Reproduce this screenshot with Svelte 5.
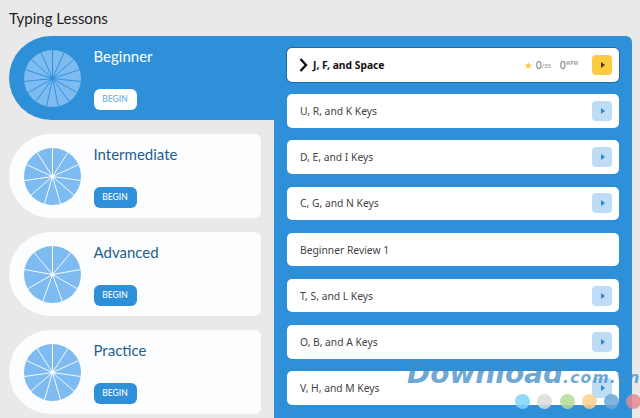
<script>
  const cards = [
    { name: 'Beginner', n: 15, active: true },
    { name: 'Intermediate', n: 11 },
    { name: 'Advanced', n: 9 },
    { name: 'Practice', n: 11 }
  ];
  const rows = ['U, R, and K Keys','D, E, and I Keys','C, G, and N Keys','Beginner Review 1','T, S, and L Keys','O, B, and A Keys','V, H, and M Keys'];
  const dots = ['#7fd4fb','#dcdcdc','#b4dc96','#fdd08c','#6ba6d6','#e88a94'];
  function spokes(n) {
    return Array.from({ length: n }, (_, i) => {
      const a = (i * 2 * Math.PI) / n;
      return { x: 30 + 30 * Math.sin(a), y: 30 - 30 * Math.cos(a) };
    });
  }
</script>

<div class="page">
  <h1>Typing Lessons</h1>
  <div class="layout">
    <div class="levels">
      {#each cards as c}
        <div class="card" class:active={c.active}>
          <svg class="wheel" viewBox="0 0 60 60" width="57" height="57">
            <circle cx="30" cy="30" r="30" fill="#7dbbf0" />
            {#each spokes(c.n) as s}
              <line x1="30" y1="30" x2={s.x} y2={s.y} class="spoke" />
            {/each}
            <circle cx="30" cy="30" r="2.2" class="hub" />
          </svg>
          <div class="info">
            <div class="name">{c.name}</div>
            <div class="begin">BEGIN</div>
          </div>
        </div>
      {/each}
    </div>
    <div class="panel">
      <div class="row current">
        <svg class="chev" width="9" height="14" viewBox="0 0 9 14"><path d="M1.5 1 L7 7 L1.5 13" fill="none" stroke="#111" stroke-width="2.4" /></svg>
        <span class="label">J, F, and Space</span>
        <span class="stats">
          <span class="star">★</span><span class="num">0</span><span class="sub">/33</span>
          <span class="num wpm">0</span><sup>WPM</sup>
        </span>
        <span class="play gold"><i></i></span>
      </div>
      {#each rows as r, i}
        <div class="row">
          <span class="label">{r}</span>
          {#if i !== 3}<span class="play"><i></i></span>{/if}
        </div>
      {/each}
    </div>
  </div>
  <div class="mark">
    <div class="wm">Download<small>.com.vn</small></div>
    <div class="dots">
      {#each dots as d}<span style="background:{d}"></span>{/each}
    </div>
  </div>
</div>

<style>
  :global(body) { margin: 0; background: #e9e9e9; }
  .page { position: relative; width: 640px; height: 418px; overflow: hidden; font-family: Lato, "Open Sans", sans-serif; }
  h1 { margin: 0; padding: 9px 0 0 9px; height: 36px; box-sizing: border-box; font-size: 15px; line-height: 19px; font-weight: 400; color: #222; }
  .layout { display: flex; margin-left: 9px; width: 623px; }
  .levels { width: 265px; display: flex; flex-direction: column; gap: 14px; flex: none; }
  .card { width: 252px; height: 84px; box-sizing: border-box; background: #fbfdfe; border-radius: 42px 6px 6px 42px; display: flex; padding: 13.5px 0 0 14.5px; flex: none; }
  .card.active { width: 265px; background: #2e90d9; border-radius: 42px 0 0 42px; }
  .wheel { flex: none; }
  .spoke { stroke: #fbfdfe; stroke-width: 1; }
  .hub { fill: #fbfdfe; }
  .active .spoke { stroke: #2e90d9; }
  .active .hub { fill: #2e90d9; }
  .info { margin-left: 13px; margin-top: -4px; }
  .name { font-size: 15px; line-height: 20px; color: #1f5f8f; }
  .active .name { color: #fff; }
  .begin { margin-top: 23px; width: 43px; height: 21px; border-radius: 6px; background: #2e90d9; color: #fff; font-size: 8.5px; font-weight: 500; line-height: 21px; text-align: center; }
  .active .begin { background: #fff; color: #6aaee6; }
  .panel { flex: 1; background: #2e90d9; border-radius: 0 6px 0 0; height: 382px; padding: 12px 13px 0 13px; box-sizing: border-box; display: flex; flex-direction: column; gap: 12.7px; }
  .row { height: 33.5px; flex: none; background: #fff; border-radius: 5px; display: flex; align-items: center; padding: 0 7px 0 13px; box-sizing: border-box; font-family: "Noto Sans", sans-serif; font-size: 10.3px; color: #444; }
  .row .label { flex: 1; }
  .current { color: #111; font-weight: 700; box-shadow: 0 0 0 1px #1f6ba6; padding-left: 12px; }
  .chev { margin-right: 5px; flex: none; }
  .stats { display: flex; align-items: center; margin-right: 14px; color: #777; font-weight: 400; font-size: 10.5px; }
  .star { color: #fbc83c; font-size: 10px; margin-right: 3px; }
  .sub { font-size: 6px; margin-top: 3px; }
  .wpm { margin-left: 9px; }
  sup { font-size: 5px; margin-top: -3px; line-height: 1; }
  .play { width: 20px; height: 20px; border-radius: 4px; background: #bfdcf7; display: flex; align-items: center; justify-content: center; flex: none; margin-left: auto; }
  .play i { width: 0; height: 0; border-left: 4px solid #2e86d0; border-top: 3.5px solid transparent; border-bottom: 3.5px solid transparent; margin-left: 1px; }
  .play.gold { background: #fccb3f; margin-left: 0; }
  .play.gold i { border-left-color: #4a3a10; }
  .mark { position: absolute; left: 0; top: 0; width: 640px; height: 418px; pointer-events: none; }
  .wm { position: absolute; left: 407px; top: 358px; font-family: "DejaVu Sans", sans-serif; font-style: italic; font-weight: 700; font-size: 28px; color: rgba(62,140,198,0.75); line-height: 32px; white-space: nowrap; }
  .wm small { font-size: 15.5px; letter-spacing: 1.2px; }
  .dots { position: absolute; left: 515px; top: 394px; display: flex; gap: 7.3px; }
  .dots span { width: 15px; height: 15px; border-radius: 50%; opacity: 0.85; }
</style>
